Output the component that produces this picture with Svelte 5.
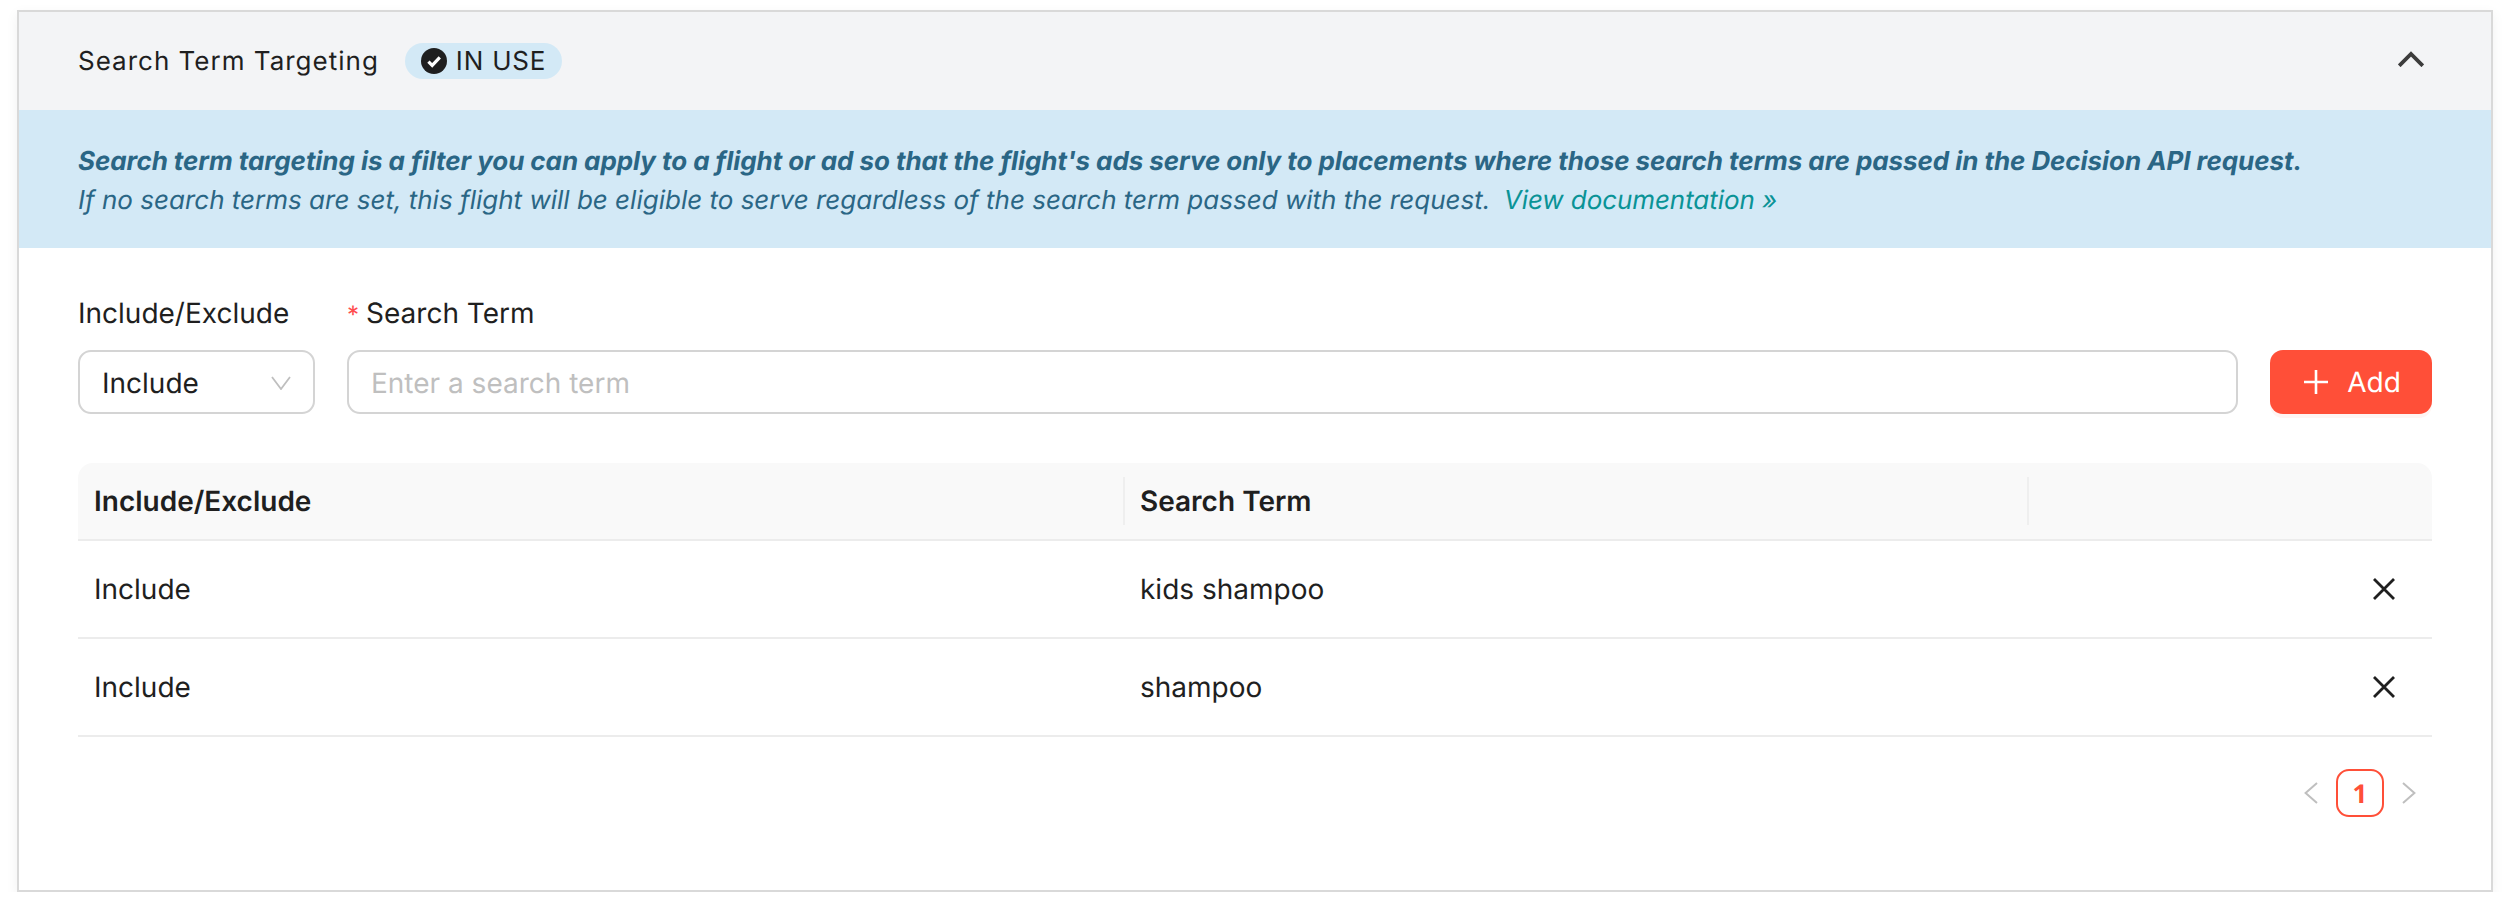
<script>
	const rows = [
		{ mode: 'Include', term: 'kids shampoo' },
		{ mode: 'Include', term: 'shampoo' }
	];
	let term = $state('');
</script>

<div class="card">
	<header class="card-head">
		<div class="head-left">
			<span class="title">Search Term Targeting</span>
			<span class="badge">
				<svg class="badge-icon" viewBox="0 0 26 26">
					<circle cx="13" cy="13" r="13" fill="currentColor" />
					<polyline
						points="7.4,13.6 11.2,17.4 18.8,9.4"
						fill="none"
						stroke="#fff"
						stroke-width="3.2"
					/>
				</svg>
				IN USE
			</span>
		</div>
		<svg class="collapse" viewBox="0 0 26 16" fill="none" stroke="currentColor" stroke-width="3.8">
			<polyline points="1.2,14.8 13,3 24.8,14.8" />
		</svg>
	</header>

	<div class="banner">
		<p class="lead">
			Search term targeting is a filter you can apply to a flight or ad so that the flight's ads
			serve only to placements where those search terms are passed in the Decision API request.
		</p>
		<p class="sub">
			If no search terms are set, this flight will be eligible to serve regardless of the search
			term passed with the request.&nbsp; <a href="#docs">View documentation »</a>
		</p>
	</div>

	<div class="body">
		<div class="form-row">
			<div class="field field-select">
				<span class="form-label">Include/Exclude</span>
				<div class="select">
					<span>Include</span>
					<svg viewBox="0 0 20 14" fill="none" stroke="currentColor" stroke-width="1.8">
						<polyline points="1,1 10,13 19,1" />
					</svg>
				</div>
			</div>
			<div class="field field-term">
				<label class="form-label" for="term"><span class="req">*</span>Search Term</label>
				<input id="term" class="input" placeholder="Enter a search term" bind:value={term} />
			</div>
			<button class="add" type="button">
				<svg viewBox="0 0 24 24" fill="none" stroke="currentColor" stroke-width="2.6">
					<path d="M12 0v24M0 12h24" />
				</svg>
				Add
			</button>
		</div>

		<div class="table">
			<div class="tr th">
				<div class="cell">Include/Exclude</div>
				<div class="cell">Search Term</div>
				<div class="cell"></div>
			</div>
			{#each rows as row}
				<div class="tr">
					<div class="cell">{row.mode}</div>
					<div class="cell">{row.term}</div>
					<div class="cell cell-action">
						<svg viewBox="0 0 22 22" fill="none" stroke="currentColor" stroke-width="2.8">
							<path d="M1 1l20 20M21 1L1 21" />
						</svg>
					</div>
				</div>
			{/each}
		</div>

		<div class="pager">
			<svg viewBox="0 0 14 22" fill="none" stroke="currentColor" stroke-width="2">
				<polyline points="13,1 1.6,11 13,21" />
			</svg>
			<span class="page">1</span>
			<svg viewBox="0 0 14 22" fill="none" stroke="currentColor" stroke-width="2">
				<polyline points="1,1 12.4,11 1,21" />
			</svg>
		</div>
	</div>
</div>

<style>
	:global(body) {
		background: #fff;
		font-family: Inter, 'Liberation Sans', sans-serif;
		color: #1f1f1f;
		text-rendering: geometricPrecision;
	}

	.card {
		margin: 10px 19px 0 17px;
		height: 882px;
		box-sizing: border-box;
		border: 2px solid #d9d9d9;
		box-shadow: 0 4px 12px rgba(0, 0, 0, 0.06);
		display: flex;
		flex-direction: column;
	}

	.card-head {
		height: 98px;
		padding: 0 67px 0 59px;
		background: #f3f4f6;
		display: flex;
		align-items: center;
		justify-content: space-between;
	}

	.head-left {
		display: flex;
		align-items: center;
		gap: 26px;
	}

	.title {
		padding-top: 1px;
		font-size: 26px;
		letter-spacing: 1px;
	}

	.badge {
		height: 36px;
		padding: 0 16px;
		border-radius: 18px;
		background: #d3e9f6;
		font-size: 26px;
		letter-spacing: 0.8px;
		display: flex;
		align-items: center;
		gap: 9px;
	}

	.badge-icon {
		width: 26px;
		height: 26px;
	}

	.collapse {
		width: 26px;
		height: 16px;
		color: #3c3c3c;
		margin-bottom: 5px;
	}

	.banner {
		height: 138px;
		box-sizing: border-box;
		padding: 32px 59px 0;
		background: #d3e9f6;
		color: #2a6685;
		font-size: 26px;
		line-height: 39px;
		font-style: italic;
	}

	.banner p {
		margin: 0;
	}

	.lead {
		font-weight: 700;
		letter-spacing: -0.07px;
	}

	.banner a {
		margin-left: -1px;
		color: #0a9396;
		letter-spacing: -0.08px;
		text-decoration: none;
	}

	.body {
		padding: 46px 59px 0;
		flex: 1;
	}

	.form-row {
		display: flex;
		align-items: flex-end;
		gap: 32px;
	}

	.field {
		display: flex;
		flex-direction: column;
		gap: 18px;
	}

	.field-select {
		width: 237px;
	}

	.field-term {
		flex: 1;
	}

	.form-label {
		font-size: 28px;
		line-height: 38px;
		white-space: nowrap;
	}

	.req {
		color: #ff4d4f;
		font-size: 24px;
		line-height: 1;
		margin-right: 7px;
	}

	.select,
	.input {
		box-sizing: border-box;
		height: 64px;
		border: 2px solid #d4d4d4;
		border-radius: 13px;
		font-size: 28px;
		font-family: inherit;
		background: #fff;
		color: #1f1f1f;
	}

	.select {
		padding: 1px 22px 0;
		display: flex;
		align-items: center;
		justify-content: space-between;
	}

	.select svg {
		width: 20px;
		height: 14px;
		color: #bfbfbf;
	}

	.input {
		width: 100%;
		padding: 1px 22px 0;
		outline: none;
		text-rendering: inherit;
	}

	.input::placeholder {
		color: #bfbfbf;
	}

	.add {
		height: 64px;
		width: 162px;
		padding: 0 0 0 3px;
		border: none;
		border-radius: 13px;
		background: #ff4f38;
		box-shadow: 0 4px 0 rgba(255, 79, 56, 0.06);
		color: #fff;
		font-size: 28px;
		font-family: inherit;
		text-rendering: inherit;
		display: flex;
		align-items: center;
		justify-content: center;
		gap: 19px;
	}

	.add svg {
		width: 24px;
		height: 24px;
	}

	.table {
		margin-top: 49px;
	}

	.tr {
		display: grid;
		grid-template-columns: 1045px 904px 1fr;
		height: 98px;
		box-sizing: border-box;
		border-bottom: 2px solid #ececec;
		font-size: 28px;
	}

	.th {
		height: 78px;
		background: #f9f9f9;
		border-radius: 15px 15px 0 0;
		font-weight: 600;
	}

	.cell {
		padding-left: 16px;
		display: flex;
		align-items: center;
		position: relative;
	}

	.cell + .cell {
		padding-left: 17px;
	}

	.th .cell + .cell::before {
		content: '';
		position: absolute;
		left: 0;
		top: 14px;
		bottom: 14px;
		width: 2px;
		background: #efefef;
	}

	.cell-action {
		justify-content: flex-end;
		padding-right: 37px;
	}

	.cell-action svg {
		width: 22px;
		height: 22px;
	}

	.pager {
		margin-top: 32px;
		padding-right: 16px;
		display: flex;
		justify-content: flex-end;
		align-items: center;
		gap: 18px;
		color: #bfbfbf;
	}

	.pager svg {
		width: 14px;
		height: 22px;
	}

	.page {
		box-sizing: border-box;
		width: 48px;
		height: 48px;
		border: 2px solid #ff4f38;
		border-radius: 13px;
		color: #ff4f38;
		font-family: 'Open Sans', sans-serif;
		font-size: 26px;
		font-weight: 700;
		display: flex;
		align-items: center;
		justify-content: center;
	}
</style>
